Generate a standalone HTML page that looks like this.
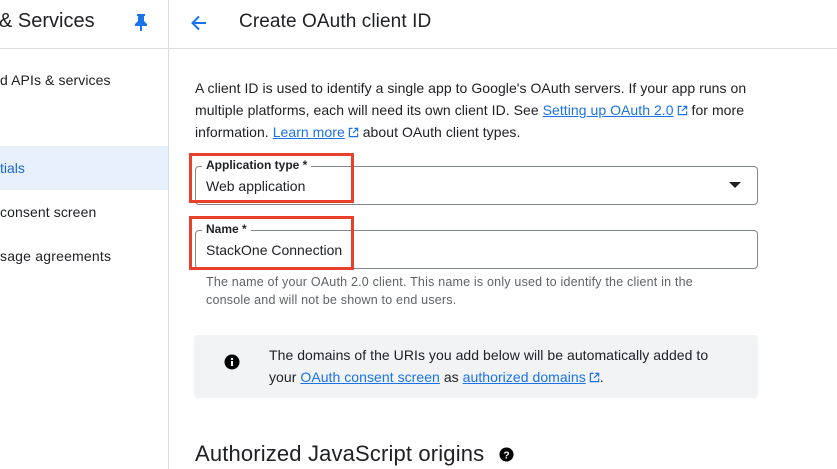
<!DOCTYPE html>
<html><head><style>
*{margin:0;padding:0;box-sizing:border-box}
body{width:837px;height:469px;overflow:hidden;background:#fff;font-family:"Liberation Sans",Arial,sans-serif;color:#202124;position:relative}
.a{position:absolute;white-space:nowrap}
a{color:#1a73e8;text-decoration:underline;text-decoration-color:#1a73e8}
.ext{display:inline-block;width:11px;height:11px;vertical-align:-1px;margin-left:3px}
</style></head><body>
<div class="a" style="left:168px;top:0;width:1px;height:469px;background:#dadce0"></div>
<div class="a" style="left:0;top:48px;width:837px;height:1px;background:#dadce0"></div>
<div class="a" style="left:-1px;top:10px;font-size:20px;">&amp; Services</div>
<svg class="a" style="left:133px;top:13px" width="16" height="18" viewBox="0 0 16 18"><path d="M4 1h8v2h-1v5l3 3v2H9v5H7v-5H2v-2l3-3V3H4z" fill="#1a73e8"/></svg>
<svg class="a" style="left:189px;top:13px" width="20" height="20" viewBox="0 0 20 20"><path d="M17 10H4M10 3.5L3.5 10 10 16.5" stroke="#1a73e8" stroke-width="2" fill="none"/></svg>
<div class="a" style="left:239px;top:11px;font-size:19px;letter-spacing:0.1px">Create OAuth client ID</div>
<div class="a" style="left:0;top:72px;font-size:14px;letter-spacing:0.1px">d APIs &amp; services</div>
<div class="a" style="left:0;top:146px;width:168px;height:44px;background:#e8f0fe"></div>
<div class="a" style="left:0;top:160px;font-size:14px;color:#1967d2">tials</div>
<div class="a" style="left:0;top:204px;font-size:14px;letter-spacing:0.1px">consent screen</div>
<div class="a" style="left:0;top:248px;font-size:14px;letter-spacing:0.2px">sage agreements</div>
<div class="a" style="left:195px;top:77px;font-size:14px;line-height:22px;letter-spacing:0.05px">A client ID is used to identify a single app to Google's OAuth servers. If your app runs on<br>multiple platforms, each will need its own client ID. See <a>Setting up OAuth 2.0</a><svg class="ext" viewBox="0 0 12 12"><path d="M5 1.5H1.5v9h9V7M7 1.5h3.5V5M10.5 1.5L5.5 6.5" stroke="#1a73e8" stroke-width="1.3" fill="none"/></svg> for more<br>information. <a>Learn more</a><svg class="ext" viewBox="0 0 12 12"><path d="M5 1.5H1.5v9h9V7M7 1.5h3.5V5M10.5 1.5L5.5 6.5" stroke="#1a73e8" stroke-width="1.3" fill="none"/></svg> about OAuth client types.</div>
<div class="a" style="left:195px;top:166px;width:563px;height:39px;border:1px solid #80868b;border-radius:4px"></div>
<div class="a" style="left:202px;top:158px;font-size:12px;font-weight:bold;background:#fff;padding:0 4px;color:#202124">Application type *</div>
<div class="a" style="left:206px;top:178px;font-size:14px;">Web application</div>
<svg class="a" style="left:729px;top:182px" width="12" height="7"><path d="M0 0h12L6 6z" fill="#202124"/></svg>
<div class="a" style="left:195px;top:230px;width:563px;height:39px;border:1px solid #80868b;border-radius:4px"></div>
<div class="a" style="left:202px;top:222px;font-size:12px;font-weight:bold;background:#fff;padding:0 4px;color:#202124">Name *</div>
<div class="a" style="left:206px;top:242px;font-size:14px;">StackOne Connection</div>
<div class="a" style="left:189px;top:153px;width:165px;height:50px;border:3px solid #e8402a"></div>
<div class="a" style="left:189px;top:216px;width:165px;height:54px;border:3px solid #e8402a"></div>
<div class="a" style="left:206px;top:273px;font-size:12.5px;line-height:18px;color:#5f6368;letter-spacing:0.2px">The name of your OAuth 2.0 client. This name is only used to identify the client in the<br>console and will not be shown to end users.</div>
<div class="a" style="left:194px;top:335px;width:564px;height:63px;background:#f1f3f4;border-radius:4px"></div>
<svg class="a" style="left:224px;top:354px" width="16" height="16" viewBox="0 0 16 16"><circle cx="8" cy="8" r="7.5" fill="#000"/><rect x="7" y="7" width="2" height="5" fill="#fff"/><rect x="7" y="4" width="2" height="2" fill="#fff"/></svg>
<div class="a" style="left:269px;top:344px;font-size:14px;line-height:22px;letter-spacing:0.05px">The domains of the URIs you add below will be automatically added to<br>your <a>OAuth consent screen</a> as <a>authorized domains</a><svg class="ext" viewBox="0 0 12 12"><path d="M5 1.5H1.5v9h9V7M7 1.5h3.5V5M10.5 1.5L5.5 6.5" stroke="#1a73e8" stroke-width="1.3" fill="none"/></svg>.</div>
<div class="a" style="left:195px;top:441px;font-size:22px;letter-spacing:0.15px">Authorized JavaScript origins</div>
<svg class="a" style="left:499px;top:447px" width="15" height="15" viewBox="0 0 16 16"><circle cx="8" cy="8" r="7.5" fill="#000"/><text x="8" y="12" font-size="11" font-weight="bold" text-anchor="middle" fill="#fff" font-family="Liberation Sans">?</text></svg>
</body></html>
